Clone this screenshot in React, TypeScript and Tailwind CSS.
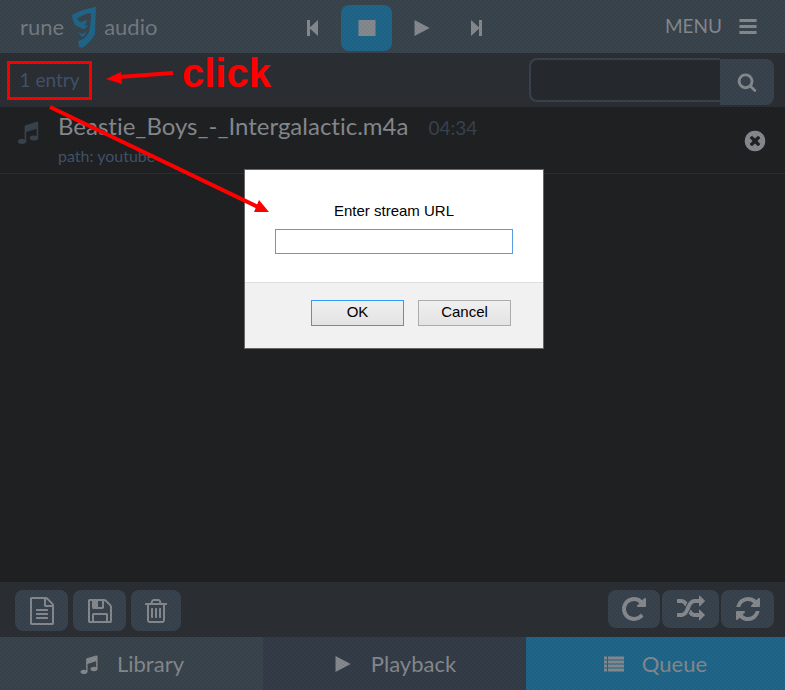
import type { ReactNode } from 'react';

const ICONS = {
  music:
    'M1664 224v1120q0 50-34 89t-86 60.5-103.5 32-96.5 10.5-96.5-10.5-103.5-32-86-60.5-34-89 34-89 86-60.5 103.5-32 96.5-10.5q105 0 192 39v-537l-768 237v709q0 50-34 89t-86 60.5-103.5 32-96.5 10.5-96.5-10.5-103.5-32-86-60.5-34-89 34-89 86-60.5 103.5-32 96.5-10.5q105 0 192 39v-967q0-31 19-56.5t49-35.5l832-256q12-4 28-4 40 0 68 28t28 68z',
  search:
    'M1216 832q0-185-131.5-316.5t-316.5-131.5-316.5 131.5-131.5 316.5 131.5 316.5 316.5 131.5 316.5-131.5 131.5-316.5zm512 832q0 52-38 90t-90 38q-54 0-90-38l-343-342q-179 124-399 124-143 0-273.5-55.5t-225-150-150-225-55.5-273.5 55.5-273.5 150-225 225-150 273.5-55.5 273.5 55.5 225 150 150 225 55.5 273.5q0 220-124 399l343 343q37 37 37 90z',
  remove:
    'M1277 1122q0-26-19-45l-181-181 181-181q19-19 19-45 0-27-19-46l-90-90q-19-19-46-19-26 0-45 19l-181 181-181-181q-19-19-45-19-27 0-46 19l-90 90q-19 19-19 46 0 26 19 45l181 181-181 181q-19 19-19 45 0 27 19 46l90 90q19 19 46 19 26 0 45-19l181-181 181 181q19 19 45 19 27 0 46-19l90-90q19-19 19-46zm387-226q0 209-103 385.5t-279.5 279.5-385.5 103-385.5-103-279.5-279.5-103-385.5 103-385.5 279.5-279.5 385.5-103 385.5 103 279.5 279.5 103 385.5z',
  file: 'M1596 380q28 28 48 76t20 88v1152q0 40-28 68t-68 28h-1344q-40 0-68-28t-28-68v-1600q0-40 28-68t68-28h896q40 0 88 20t76 48zm-444-244v376h376q-10-29-22-41l-313-313q-12-12-41-22zm384 1528v-1024h-416q-40 0-68-28t-28-68v-416h-768v1536h1280zm-1024-864q0-14 9-23t23-9h704q14 0 23 9t9 23v64q0 14-9 23t-23 9h-704q-14 0-23-9t-9-23v-64zm736 224q14 0 23 9t9 23v64q0 14-9 23t-23 9h-704q-14 0-23-9t-9-23v-64q0-14 9-23t23-9h704zm0 256q14 0 23 9t9 23v64q0 14-9 23t-23 9h-704q-14 0-23-9t-9-23v-64q0-14 9-23t23-9h704z',
  save: 'M512 1536h768v-384h-768v384zm896 0h128v-896q0-14-10-38.5t-20-34.5l-281-281q-10-10-34-20t-39-10v416q0 40-28 68t-68 28h-576q-40 0-68-28t-28-68v-416h-128v1280h128v-416q0-40 28-68t68-28h832q40 0 68 28t28 68v416zm-384-928v-320q0-13-9.5-22.5t-22.5-9.5h-192q-13 0-22.5 9.5t-9.5 22.5v320q0 13 9.5 22.5t22.5 9.5h192q13 0 22.5-9.5t9.5-22.5zm640 32v928q0 40-28 68t-68 28h-1344q-40 0-68-28t-28-68v-1344q0-40 28-68t68-28h928q40 0 88 20t76 48l280 280q28 28 48 76t20 88z',
  trash:
    'M704 736v576q0 14-9 23t-23 9h-64q-14 0-23-9t-9-23v-576q0-14 9-23t23-9h64q14 0 23 9t9 23zm256 0v576q0 14-9 23t-23 9h-64q-14 0-23-9t-9-23v-576q0-14 9-23t23-9h64q14 0 23 9t9 23zm256 0v576q0 14-9 23t-23 9h-64q-14 0-23-9t-9-23v-576q0-14 9-23t23-9h64q14 0 23 9t9 23zm128 724v-948h-896v948q0 22 7 40.5t14.5 27 10.5 8.5h832q3 0 10.5-8.5t14.5-27 7-40.5zm-672-1076h448l-48-117q-7-9-17-11h-317q-10 2-17 11zm928 32v64q0 14-9 23t-23 9h-96v948q0 83-47 143.5t-113 60.5h-832q-66 0-113-58.5t-47-141.5v-952h-96q-14 0-23-9t-9-23v-64q0-14 9-23t23-9h309l70-167q15-37 54-63t79-26h320q40 0 79 26t54 63l70 167h309q14 0 23 9t9 23z',
  repeat:
    'M1664 256v448q0 26-19 45t-45 19h-448q-42 0-59-40-17-39 14-69l138-138q-148-137-349-137-104 0-198.5 40.5t-163.5 109.5-109.5 163.5-40.5 198.5 40.5 198.5 109.5 163.5 163.5 109.5 198.5 40.5q119 0 225-52t179-147q7-10 23-12 15 0 25 9l137 138q9 8 9.5 20.5t-7.5 22.5q-109 132-264 204.5t-327 72.5q-156 0-298-61t-245-164-164-245-61-298 61-298 164-245 245-164 298-61q147 0 284.5 55.5t244.5 156.5l130-129q29-31 70-14 39 17 39 59z',
  random:
    'M666 481q-60 92-137 273-22-45-37-72.5t-40.5-63.5-51-56.5-63-35-81.5-14.5h-224q-14 0-23-9t-9-23v-192q0-14 9-23t23-9h224q250 0 410 225zm1126 799q0 14-9 23l-320 320q-9 9-23 9-13 0-22.5-9.5t-9.5-22.5v-192q-32 0-85 .5t-81 1-73-1-71-5-64-10.5-63-18.5-58-28.5-59-40-55-53.5-56-69.5q59-93 136-273 22 45 37 72.5t40.5 63.5 51 56.5 63 35 81.5 14.5h256v-192q0-14 9-23t23-9q12 0 24 10l319 319q9 9 9 23zm0-896q0 14-9 23l-320 320q-9 9-23 9-13 0-22.5-9.5t-9.5-22.5v-192h-256q-48 0-87 15t-69 45-51 61.5-45 77.5q-32 62-78 171-29 66-49.5 111t-54 105-64 100-74 83-90 68.5-106.5 42-128 16.5h-224q-14 0-23-9t-9-23v-192q0-14 9-23t23-9h224q48 0 87-15t69-45 51-61.5 45-77.5q32-62 78-171 29-66 49.5-111t54-105 64-100 74-83 90-68.5 106.5-42 128-16.5h256v-192q0-14 9-23t23-9q12 0 24 10l319 319q9 9 9 23z',
  refresh:
    'M1639 1056q0 5-1 7-64 268-268 434.5t-478 166.5q-146 0-282.5-55t-243.5-157l-129 129q-19 19-45 19t-45-19-19-45v-448q0-26 19-45t45-19h448q26 0 45 19t19 45-19 45l-137 137q71 66 161 102t187 36q134 0 250-65t186-179q11-17 53-117 8-23 30-23h192q13 0 22.5 9.5t9.5 22.5zm25-800v448q0 26-19 45t-45 19h-448q-26 0-45-19t-19-45 19-45l138-138q-148-137-349-137-134 0-250 65t-186 179q-11 17-53 117-8 23-30 23h-199q-13 0-22.5-9.5t-9.5-22.5v-7q65-268 270-434.5t480-166.5q146 0 284 55.5t245 156.5l130-129q19-19 45-19t45 19 19 45z',
  list: 'M0 224h269v269h-269zM358 224h1434v269h-1434zM0 583h269v269h-269zM358 583h1434v269h-1434zM0 942h269v269h-269zM358 942h1434v269h-1434zM0 1301h269v269h-269zM358 1301h1434v269h-1434z',
  bars: 'M128 179h1536v269h-1536zM128 717h1536v269h-1536zM128 1254h1536v269h-1536z',
  play: 'M224 180L1590 896L224 1612z',
  stop: 'M134 180h1524v1432h-1524z',
  prev: 'M448 180h269v640L1434 180v1432L717 972v640h-269z',
  next: 'M1344 180h-269v640L358 180v1432L1075 972v640h269z',
};

type IconName = keyof typeof ICONS;

function Icon({ name, className = 'size-5' }: { name: IconName; className?: string }) {
  return (
    <svg className={`shrink-0 ${className}`} viewBox="0 0 1792 1792" fill="currentColor" aria-hidden="true">
      <path d={ICONS[name]} />
    </svg>
  );
}

function Logo() {
  return (
    <a href="#home" className="flex items-center gap-[7px] text-[22px] text-[#747b81]">
      rune
      <svg className="h-[42px] w-[26px]" viewBox="0 0 26 42" fill="#20668a" aria-hidden="true">
        <path d="M1 9Q11 3 25 1L24 28Q20 36 11 42L8 41L7 35Q15 33 18 26Q20 18 20 7Q12 8 6 13L9 16L16 14Q16 17 13 20L17 19Q15 23 12 23L4 19Q1 14 1 9Z" />
        <path d="M7 26L12 28L15 25Q15 30 11 31Z" />
      </svg>
      audio
    </a>
  );
}

function PlayerButton({ name, active = false }: { name: IconName; active?: boolean }) {
  return (
    <button
      aria-label={name}
      className={`flex h-[46px] w-[51px] items-center justify-center rounded-lg ${active ? 'bg-[#20668a]' : ''}`}
    >
      <Icon name={name} />
    </button>
  );
}

function ToolButton({ name, label, className }: { name: IconName; label: string; className: string }) {
  return (
    <button
      aria-label={label}
      className={`flex items-center justify-center rounded-lg bg-[#38434e] ${className}`}
    >
      <Icon name={name} className="size-7" />
    </button>
  );
}

function Tab({ name, className, children }: { name: IconName; className: string; children: ReactNode }) {
  return (
    <a href={`#${name}`} className={`flex items-center justify-center gap-[18px] text-[22px] ${className}`}>
      <Icon name={name} />
      {children}
    </a>
  );
}

function StreamDialog() {
  return (
    <form
      role="dialog"
      aria-label="Stream URL"
      className="w-[300px] border border-[#666] bg-white font-['Liberation_Sans',sans-serif] text-[15px] text-black"
    >
      <div className="flex h-28 flex-col items-center px-[30px] pt-[31px]">
        <label htmlFor="stream-url" className="leading-5">
          Enter stream URL
        </label>
        <input id="stream-url" className="mt-2 h-[25px] w-full border border-[#569de5] px-1 outline-none" />
      </div>
      <div className="flex h-[66px] justify-end gap-[14px] border-t border-[#dfdfdf] bg-[#f1f1f1] pt-[17px] pr-8">
        <button
          type="button"
          className="h-[26px] w-[93px] border border-[#3399ff] bg-linear-to-b from-[#f0f0f0] to-[#e3e3e3] pb-0.5 leading-5"
        >
          OK
        </button>
        <button
          type="button"
          className="h-[26px] w-[93px] border border-[#acacac] bg-linear-to-b from-[#f0f0f0] to-[#e3e3e3] pb-0.5 leading-5"
        >
          Cancel
        </button>
      </div>
    </form>
  );
}

export default function App() {
  return (
    <div className="relative flex min-h-screen flex-col bg-[#1f2122] font-[Lato,sans-serif] text-[#86898d] [font-variant-ligatures:none]">
      <header className="grid h-[53px] grid-cols-[1fr_auto_1fr] items-center bg-[#39444d] pr-[17px] pl-5">
        <Logo />
        <nav className="flex items-center gap-1 pt-[3px]">
          <PlayerButton name="prev" />
          <PlayerButton name="stop" active />
          <PlayerButton name="play" />
          <PlayerButton name="next" />
        </nav>
        <button className="flex items-center gap-4 justify-self-end pr-2.5 text-[19px]">
          MENU
          <Icon name="bars" />
        </button>
      </header>

      <div className="flex h-[54px] items-center justify-between bg-[#2b2f34] pr-[11px] pl-[7px]">
        <span className="flex h-[39px] w-[85px] items-center justify-center border-3 border-[#ff0000] text-[19px] text-[#41536a]">
          1 entry
        </span>
        <form role="search" className="flex items-start self-start pt-[5px]">
          <input
            type="search"
            aria-label="Search queue"
            className="h-11 w-[191px] rounded-l-lg border-2 border-r-0 border-[#38434e] bg-[#262a2f] px-3 outline-none"
          />
          <button
            type="button"
            aria-label="Search"
            className="mt-px flex h-[46px] w-[54px] items-center justify-center rounded-r-lg bg-[#38434e]"
          >
            <Icon name="search" />
          </button>
        </form>
      </div>

      <main className="flex-1">
        <ul>
          <li className="flex h-[67px] items-center border-b border-[#2b2e30] pr-[18px] pl-4">
            <Icon name="music" className="mb-4 size-6 text-[#38434e]" />
            <div className="mb-0.5 ml-[18px] flex-1">
              <p className="text-2xl leading-8">
                Beastie_Boys_-_Intergalactic.m4a
                <span className="ml-5 text-[19px] text-[#38434e]">04:34</span>
              </p>
              <p className="text-base leading-6 text-[#41536a]">path: youtube</p>
            </div>
            <button aria-label="Remove from queue" className="mt-0.5">
              <Icon name="remove" className="size-6" />
            </button>
          </li>
        </ul>
      </main>

      <div className="flex h-[55px] items-start justify-between bg-[#2b2f34] pt-2 pr-[11px] pl-[15px]">
        <div className="flex gap-[5px]">
          <ToolButton name="file" label="Playlists" className="h-[41px] w-[53px]" />
          <ToolButton name="save" label="Save queue" className="h-[41px] w-[53px]" />
          <ToolButton name="trash" label="Clear queue" className="h-[41px] w-[50px]" />
        </div>
        <div className="flex gap-0.5">
          <ToolButton name="repeat" label="Repeat" className="h-[38px] w-[52px]" />
          <ToolButton name="random" label="Random" className="h-[38px] w-[57px]" />
          <ToolButton name="refresh" label="Single" className="h-[38px] w-[53px]" />
        </div>
      </div>

      <nav className="grid h-[53px] grid-cols-[67fr_67fr_66fr]">
        <Tab name="music" className="bg-[#39444d]">Library</Tab>
        <Tab name="play" className="bg-[#343c48]">Playback</Tab>
        <Tab name="list" className="bg-[#20668a]">Queue</Tab>
      </nav>

      {/* Fine dotted grain over the dimmed page */}
      <div className="pointer-events-none absolute inset-0 bg-[repeating-conic-gradient(#0000000d_0_25%,#00000000_0_50%)] bg-size-[4px_4px]" />

      <div className="absolute inset-x-0 top-[169px] flex justify-center pl-[3px]">
        <StreamDialog />
      </div>

      {/* Hint arrows drawn over the screen */}
      <span className="absolute top-[51px] left-[182px] font-['Liberation_Sans',sans-serif] text-[40px] leading-11 font-bold text-[#ff0000]">
        click
      </span>
      <svg
        className="pointer-events-none absolute top-0 left-0"
        width="290"
        height="230"
        fill="#ff0000"
        aria-hidden="true"
      >
        <path d="M173 73L119 77M50 107L258 207" stroke="#ff0000" strokeWidth="4" />
        <path d="M106 79L121 72L122 84ZM269 212L254 212L259 200Z" />
      </svg>
    </div>
  );
}
